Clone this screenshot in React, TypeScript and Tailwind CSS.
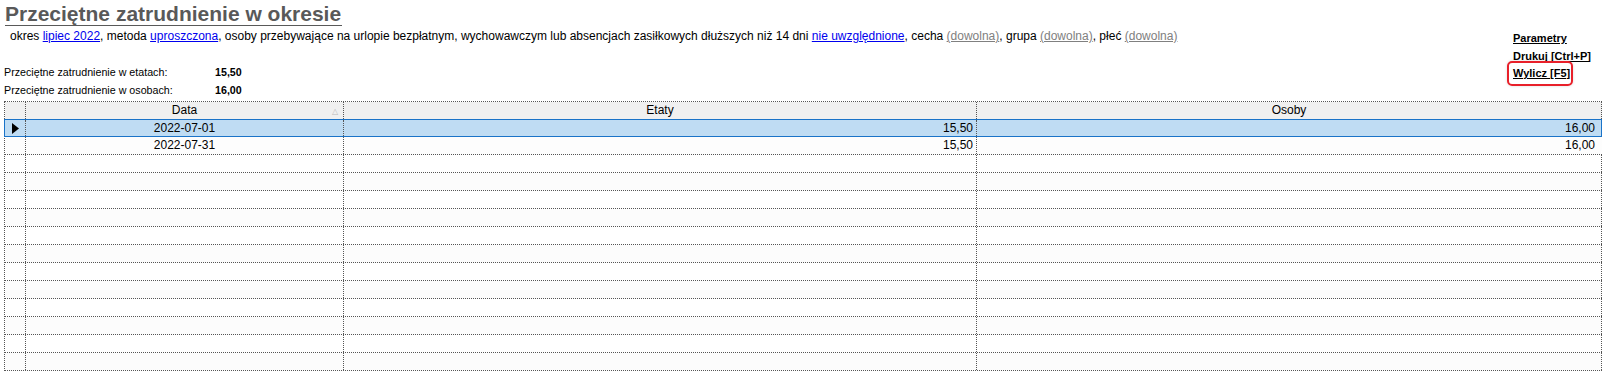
import React from 'react';

const rows = [
  { data: '2022-07-01', etaty: '15,50', osoby: '16,00' },
  { data: '2022-07-31', etaty: '15,50', osoby: '16,00' },
];

const App: React.FC = () => {
  const empty = Array.from({ length: 12 });
  return (
    <div className="w-[1602px] h-[377px] overflow-hidden bg-white relative font-['Liberation_Sans',Arial,sans-serif] text-black">
      <div className="px-[5px] pt-[3px]">
        <h1 className="inline-block text-[21px] leading-[22px] font-bold text-[#595959] border-b border-[#595959] pr-[1px]">
          Przeciętne zatrudnienie w okresie
        </h1>
      </div>
      <div className="pl-[10px] text-[12px] leading-[14px] mt-[1px]">
        okres <span className="text-[#0000ee] underline">lipiec 2022</span>, metoda{' '}
        <span className="text-[#0000ee] underline">uproszczona</span>, osoby przebywające na urlopie bezpłatnym,
        wychowawczym lub absencjach zasiłkowych dłuższych niż 14 dni{' '}
        <span className="text-[#0000ee] underline">nie uwzględnione</span>, cecha{' '}
        <span className="text-[#808080] underline">(dowolna)</span>, grupa{' '}
        <span className="text-[#808080] underline">(dowolna)</span>, płeć{' '}
        <span className="text-[#808080] underline">(dowolna)</span>
      </div>

      <div className="absolute left-[1513px] top-[30px] flex flex-col items-start text-[11px] leading-[17.5px] font-bold underline">
        <span>Parametry</span>
        <span>Drukuj [Ctrl+P]</span>
        <span className="relative">
          Wylicz [F5]
          <span className="absolute left-[-6px] top-[-4px] w-[66px] h-[25px] border-2 border-[#e8202a] rounded-[5px] shadow-[0_0_3px_rgba(0,0,0,0.15)]" />
        </span>
      </div>

      <div className="pl-[4px] mt-[20px] text-[10.7px] leading-[18px]">
        <div className="flex">
          <span className="w-[211px]">Przeciętne zatrudnienie w etatach:</span>
          <span className="font-bold">15,50</span>
        </div>
        <div className="flex">
          <span className="w-[211px]">Przeciętne zatrudnienie w osobach:</span>
          <span className="font-bold">16,00</span>
        </div>
      </div>

      <div className="absolute left-[4px] top-[101px] w-[1598px] border-l border-t border-dotted border-[#555] text-[12px]">
        <div className="flex h-[17px] bg-[#f0f0f0] leading-[17px]">
          <div className="w-[21px] border-r border-dotted border-[#555]" />
          <div className="w-[318px] border-r border-dotted border-[#555] text-center relative">
            Data
            <span className="absolute right-[5px] top-[1px] text-[8px] text-[#bbb]">△</span>
          </div>
          <div className="w-[633px] border-r border-dotted border-[#555] text-center">Etaty</div>
          <div className="w-[625px] border-r border-dotted border-[#555] text-center">Osoby</div>
        </div>
        {rows.map((r, i) => (
          <div
            key={r.data}
            className={`flex h-[18px] leading-[16px] ${i === 0 ? 'bg-[#bfdcf3] border border-[#1a73c8] -ml-px' : 'bg-[#fdfdfd] border-b border-dotted border-[#555]'}`}
          >
            <div className="w-[21px] border-r border-dotted border-[#555] flex items-center justify-center">
              {i === 0 && (
                <svg width="7" height="11" viewBox="0 0 7 11">
                  <path d="M0 0 L7 5.5 L0 11 Z" fill="#000" />
                </svg>
              )}
            </div>
            <div className="w-[318px] border-r border-dotted border-[#555] text-center">{r.data}</div>
            <div className="w-[633px] border-r border-dotted border-[#555] text-right pr-[3px]">{r.etaty}</div>
            <div className="w-[624px] text-right pr-[6px]">{r.osoby}</div>
          </div>
        ))}
        {empty.map((_, i) => (
          <div
            key={i}
            className={`flex h-[18px] border-b border-dotted border-[#555] ${i % 2 === 0 ? 'bg-white' : 'bg-[#fcfcfc]'}`}
          >
            <div className="w-[21px] border-r border-dotted border-[#555]" />
            <div className="w-[318px] border-r border-dotted border-[#555]" />
            <div className="w-[633px] border-r border-dotted border-[#555]" />
            <div className="w-[625px] border-r border-dotted border-[#555]" />
          </div>
        ))}
      </div>
    </div>
  );
};

export default App;
